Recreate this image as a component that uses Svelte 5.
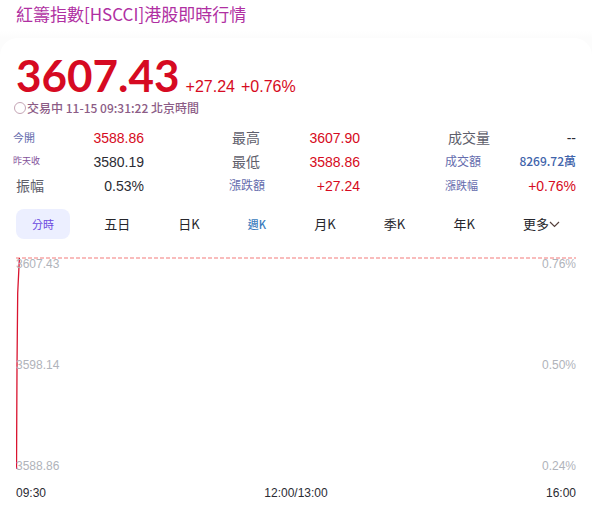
<script>
  const columns = [
    [
      { label: '今開', value: '3588.86', size: 'small', tone: 'up' },
      { label: '昨天收', value: '3580.19', size: 'tiny' },
      { label: '振幅', value: '0.53%', size: 'normal' },
    ],
    [
      { label: '最高', value: '3607.90', size: 'normal', tone: 'up' },
      { label: '最低', value: '3588.86', size: 'normal', tone: 'up' },
      { label: '漲跌額', value: '+27.24', size: 'medium', tone: 'up' },
    ],
    [
      { label: '成交量', value: '--', size: 'normal' },
      { label: '成交額', value: '8269.72萬', size: 'medium', tone: 'turnover' },
      { label: '漲跌幅', value: '+0.76%', size: 'small', tone: 'up' },
    ],
  ];
  const tabs = ['分時', '五日', '日K', '週K', '月K', '季K', '年K'];
  const levels = [
    ['3607.43', '0.76%'],
    ['3598.14', '0.50%'],
    ['3588.86', '0.24%'],
  ];
  let active = $state('分時');
</script>

<main>
  <header><h1>紅籌指數[HSCCI]港股即時行情</h1></header>
  <section class="card">
    <div class="quote">
      <strong>3607.43</strong>
      <span>+27.24</span>
      <span>+0.76%</span>
    </div>
    <p class="status"><i></i>交易中 11-15 09:31:22 北京時間</p>

    <div class="stats">
      {#each columns as column}
        <dl>
          {#each column as item}
            <div>
              <dt class={item.size}>{item.label}</dt>
              <dd class={item.tone}>{item.value}</dd>
            </div>
          {/each}
        </dl>
      {/each}
    </div>

    <nav>
      {#each tabs as tab}
        <button class:active={active === tab} class:week={tab === '週K'} onclick={() => (active = tab)}>{tab}</button>
      {/each}
      <button class="more">更多<svg width="11" height="7" viewBox="0 0 11 7"><path d="M1 1l4.5 4.5L10 1" fill="none" stroke="#55403c" stroke-width="1.2" /></svg></button>
    </nav>

    <div class="chart">
      <svg class="plot" width="100%" height="212">
        <line x1="0" y1="1" x2="100%" y2="1" stroke="#f9bcbc" stroke-width="2" stroke-dasharray="4 2" />
        <path d="M0.5 212L1 110L1.7 36L3.4 1" fill="none" stroke="#d9142f" stroke-width="1.3" />
      </svg>
      <div class="levels">
        {#each levels as [price, percent]}
          <div><span>{price}</span><span>{percent}</span></div>
        {/each}
      </div>
    </div>
    <div class="times"><span>09:30</span><span>12:00/13:00</span><span>16:00</span></div>
  </section>
</main>

<style>
  :global(body) {
    margin: 0;
    background: #fff;
  }
  main {
    background: #fcfcfc;
    font-family: "Liberation Sans", "Noto Sans CJK TC", sans-serif;
    color: #2b2b33;
  }
  header {
    padding: 2px 16px 12px;
    background: linear-gradient(#fff 80%, #fcfcfc);
  }
  h1 {
    margin: 0;
    font: 400 17px/24px "Noto Sans CJK TC", sans-serif;
    color: #b02fa2;
  }
  .card {
    padding: 12px 16px;
    border-radius: 18px 18px 0 0;
    background: #fff;
  }
  .quote {
    display: flex;
    align-items: baseline;
    gap: 6px;
    font-size: 16px;
    line-height: 20px;
    color: #d60a22;
  }
  .quote strong {
    font: 700 44px/50px Lato, sans-serif;
    font-kerning: none;
  }
  .status {
    display: flex;
    align-items: center;
    margin: 0 0 10px -2px;
    font: 500 12px/16px "Noto Sans CJK TC", sans-serif;
    color: #8c5c86;
  }
  .status i {
    box-sizing: border-box;
    width: 12px;
    height: 12px;
    margin-right: 1px;
    border: 1px solid #c5a5b5;
    border-radius: 50%;
  }
  .stats {
    display: grid;
    grid-template-columns: repeat(3, 1fr);
    gap: 88px;
  }
  dl {
    margin: 0;
  }
  dl div {
    display: flex;
    justify-content: space-between;
    align-items: center;
    height: 24px;
    white-space: nowrap;
  }
  dt {
    font-family: "Noto Sans CJK TC", sans-serif;
    line-height: 22px;
    color: #656cad;
  }
  .normal {
    padding-bottom: 2px;
    font-size: 14px;
    color: #5e5e6b;
  }
  .medium {
    font-size: 12px;
  }
  .small {
    font-size: 11px;
  }
  .tiny {
    font-size: 9px;
    color: #84529a;
  }
  .small,
  .medium,
  .tiny {
    margin-left: -3px;
    padding-bottom: 2px;
  }
  dd {
    margin: 0;
    font-size: 14px;
    line-height: 24px;
  }
  .up {
    color: #d60a22;
  }
  .turnover {
    font: 500 12px/22px "Noto Sans CJK TC", sans-serif;
    padding-bottom: 2px;
    color: #3f64ab;
  }
  nav {
    display: flex;
    justify-content: space-between;
    margin-top: 11px;
  }
  button {
    display: flex;
    align-items: center;
    height: 30px;
    padding: 0 14px;
    border: 0;
    border-radius: 8px;
    background: none;
    font: 400 13px/20px "Noto Sans CJK TC", sans-serif;
    color: #26262c;
    cursor: pointer;
  }
  .active {
    padding: 0 16px;
    background: #ecefff;
    font-size: 11px;
    color: #6a48df;
  }
  .week {
    font-size: 11px;
    font-weight: 500;
    color: #3b7cbd;
  }
  .more {
    padding-right: 16px;
  }
  .chart {
    display: grid;
    margin-top: 18px;
  }
  .plot,
  .levels {
    grid-area: 1 / 1;
  }
  .levels {
    display: flex;
    flex-direction: column;
    justify-content: space-between;
    min-height: 216px;
    font-size: 12px;
    line-height: 14px;
    color: #b0b3ba;
  }
  .levels div,
  .times {
    display: flex;
    justify-content: space-between;
  }
  .times {
    margin-top: 12px;
    font-size: 12px;
    line-height: 16px;
  }
</style>
